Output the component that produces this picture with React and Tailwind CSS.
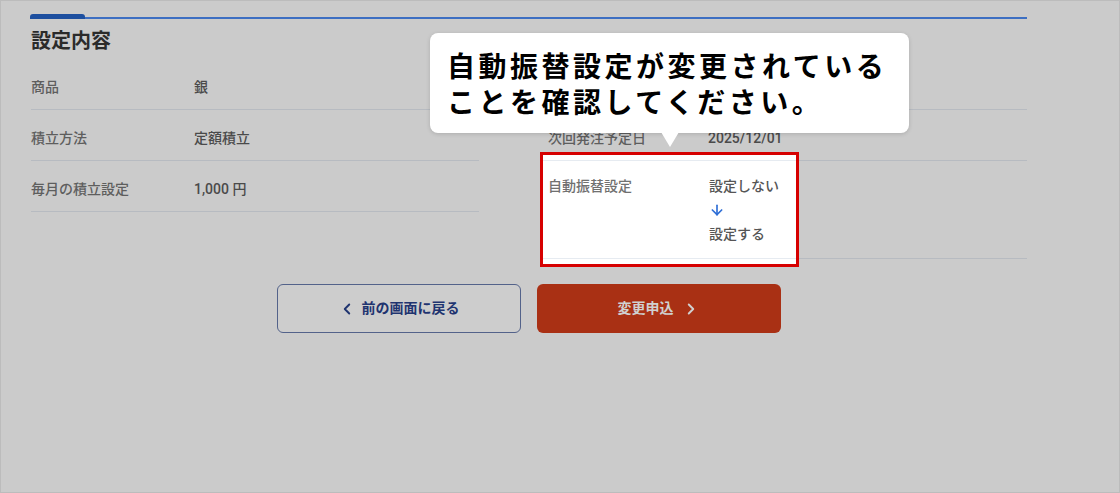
import { ChevronLeft, ChevronRight, ArrowDown } from 'lucide-react';

const font = { fontFamily: 'Roboto, "Noto Sans CJK JP", sans-serif' };

function Row({ label, value }) {
    return (
        <div className="flex pt-[16px] pb-[10px] border-b border-[#b7bbc1] text-[14px] leading-[24px] font-medium">
            <div className="w-[163px] text-[#5e5e5e]">{label}</div>
            <div className="text-[#4a4a4a]">{value}</div>
        </div>
    );
}

export default function App() {
    return (
        <div className="w-[1120px] h-[493px] bg-[#cbcbcb] border border-[#bcbcbc] relative overflow-hidden" style={font}>
            <div className="w-[997px] ml-[29px] pt-[13px]">
                {/* tab bar */}
                <div className="flex items-end">
                    <div className="w-[55px] h-[5px] rounded-t-[3px] bg-[#1d4f9f]"></div>
                    <div className="flex-1 h-[2px] bg-[#3d6fc2]"></div>
                </div>

                <h2 className="mt-[10px] mb-[6px] pl-[1px] text-[20px] leading-[24px] font-bold text-[#2b2b2b]">設定内容</h2>

                <div className="flex items-start">
                    <div className="w-[449px] pl-[1px]">
                        <Row label="商品" value="銀" />
                        <Row label="積立方法" value="定額積立" />
                        <Row label="毎月の積立設定" value="1,000 円" />
                    </div>

                    <div className="ml-[65px] flex-1">
                        {/* row hidden under the callout */}
                        <div className="h-[51px] border-b border-[#b7bbc1]"></div>
                        <div className="flex pt-[16px] pb-[10px] pl-[4px] border-b border-[#b7bbc1] text-[14px] leading-[24px] font-medium">
                            <div className="w-[160px] text-[#5e5e5e]">次回発注予定日</div>
                            <div className="text-[#4a4a4a]">2025/12/01</div>
                        </div>

                        {/* highlighted row */}
                        <div className="flex border-b border-[#b7bbc1]">
                            <div className="relative z-10 -mt-[9px] -mb-[9px] -ml-[4px] w-[259px] border-[3px] border-[#d60000] bg-white pt-[5px] pb-[5px]">
                                <div className="flex border-t border-b border-[#e6ebf1] pt-[13px] pb-[12px] pl-[5px] text-[14px] leading-[24px] font-medium">
                                    <div className="w-[161px] text-[#707070]">自動振替設定</div>
                                    <div className="flex flex-col text-[#555555]">
                                        <span>設定しない</span>
                                        <span className="h-[24px] flex items-center text-[#2f6fd6]">
                                            <ArrowDown size={16} strokeWidth={2.5} />
                                        </span>
                                        <span>設定する</span>
                                    </div>
                                </div>
                            </div>
                        </div>
                    </div>
                </div>

                {/* buttons */}
                <div className="mt-[25px] flex justify-center gap-[16px]">
                    <button className="w-[244px] h-[49px] rounded-[6px] border-[1.5px] border-[#53628a] bg-[#cdcdcd] flex items-center justify-center gap-[6px] text-[14px] font-bold text-[#1f3470]">
                        <ChevronLeft size={18} strokeWidth={2.5} />
                        <span>前の画面に戻る</span>
                    </button>
                    <button className="w-[244px] h-[49px] rounded-[6px] bg-[#a93014] flex items-center justify-center gap-[8px] text-[14px] font-bold text-[#d0d0d0]">
                        <span>変更申込</span>
                        <ChevronRight size={18} strokeWidth={2.5} />
                    </button>
                </div>
            </div>

            {/* callout */}
            <div className="absolute left-[429px] top-[32px] w-[479px] h-[100px] bg-white rounded-[8px] shadow-[0_1px_4px_rgba(0,0,0,0.15)] pl-[17px] pt-[14px]">
                <div className="flex flex-col text-[28px] leading-[36px] font-bold tracking-[3.5px] text-black" style={{ fontFamily: '"Noto Sans CJK JP", sans-serif' }}>
                    <span className="block h-[36px]">自動振替設定が変更されている</span>
                    <span className="block h-[36px]">ことを確認してください。</span>
                </div>
                <div className="absolute left-[231px] top-[99px] w-0 h-0 border-l-[9px] border-r-[9px] border-t-[15px] border-l-transparent border-r-transparent border-t-white"></div>
            </div>
        </div>
    );
}
